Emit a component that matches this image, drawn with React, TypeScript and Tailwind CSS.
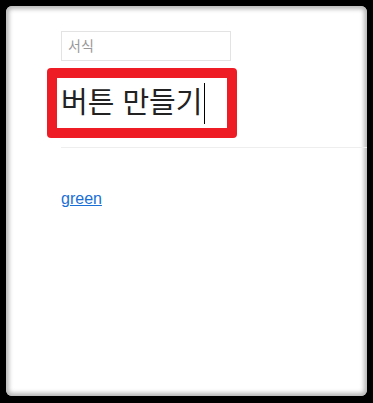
export default function App() {
  return (
    <div className="w-[373px] h-[403px] bg-black pt-[6px] pl-[6px] pr-[6px] pb-[7px] font-['Liberation_Sans','Noto_Sans_CJK_KR',sans-serif]">
      <div className="h-full bg-white rounded-[6px] shadow-[inset_0_0_4px_3px_rgba(170,170,170,0.85)] pt-[25px] pl-[55px]">
        {/* format input */}
        <input
          placeholder="서식"
          className="block w-[170px] h-[30px] border border-[#e3e3e3] px-[6px] text-[14px] text-[#333] outline-none placeholder:text-[#999]"
        />

        {/* highlighted title field */}
        <div className="mt-[7px] -ml-[14px] w-[190px] h-[70px] bg-[#ee1c25] rounded-[4px] p-[10px]">
          <div className="h-full bg-white flex items-center pl-[4px] text-[29px] leading-none text-[#222]">
            <span>버튼 만들기</span>
            <span className="ml-[2px] w-px h-[41px] bg-black" />
          </div>
        </div>

        <div className="mt-[9px] h-px bg-[#eeeeee]" />

        <a href="#" className="inline-block mt-[39px] text-[16px] leading-[24px] text-[#1a6fd6] underline">
          green
        </a>
      </div>
    </div>
  );
}
